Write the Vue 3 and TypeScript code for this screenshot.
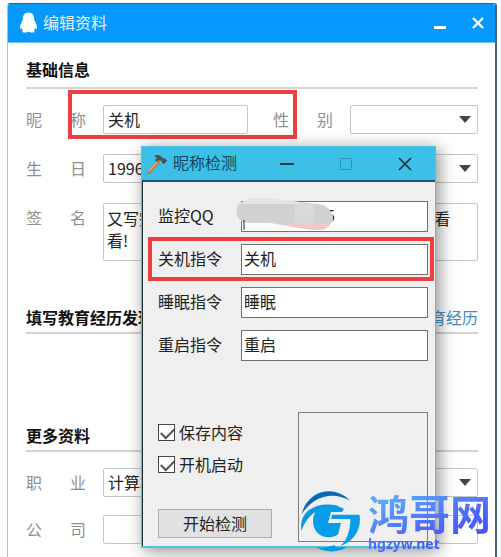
<script setup lang="ts">
import { ref } from 'vue'

interface Command {
  id: string
  label: string
  value: string
  marked: boolean
}

const nickname = ref('关机')
const signature = ref('又写完' + '\u3000'.repeat(17) + '\u00a0\u00a0看\n看!')
const commands = ref<Command[]>([
  { id: 'qq', label: '监控QQ', value: '', marked: false },
  { id: 'shutdown', label: '关机指令', value: '关机', marked: true },
  { id: 'sleep', label: '睡眠指令', value: '睡眠', marked: false },
  { id: 'restart', label: '重启指令', value: '重启', marked: false },
])
const saveContent = ref(true)
const autoStart = ref(true)
</script>

<template>
  <div class="desktop">
    <main class="profile">
      <header class="profile-bar">
        <svg class="penguin" viewBox="0 0 18 22" aria-hidden="true">
          <path d="M9 0C5 0 3 3 3 7c0 2-3 5-3 9 0 2 1 2 2 0 0 2 1 3 1 3-1 1-1 2 1 2h3l2-1 2 1h3c2 0 2-1 1-2l1-3c1 2 2 2 2 0 0-4-3-7-3-9 0-4-2-7-6-7Z" fill="#fff" />
        </svg>
        <h1>编辑资料</h1>
        <button class="bar-button" type="button" aria-label="最小化">
          <svg viewBox="0 0 14 14"><path d="M1 11.5h12" stroke="#fff" stroke-width="3" /></svg>
        </button>
        <button class="bar-button" type="button" aria-label="关闭">
          <svg viewBox="0 0 14 14"><path d="m2 2 10 10M12 2 2 12" stroke="#fff" stroke-width="2.4" /></svg>
        </button>
      </header>

      <form class="profile-body" @submit.prevent>
        <h2 class="first">基础信息</h2>
        <div class="rows">
          <div class="row">
            <label class="spread" for="nick"><span>昵</span><span>称</span></label>
            <input id="nick" v-model="nickname" class="nick" type="text" />
            <label class="spread second" for="gender"><span>性</span><span>别</span></label>
            <div class="pick">
              <select id="gender"><option></option></select>
              <svg viewBox="0 0 12 8" aria-hidden="true"><path d="M0 1h12L6 8Z" /></svg>
            </div>
            <span class="mark nick-mark"></span>
          </div>
          <div class="row">
            <label class="spread" for="birth"><span>生</span><span>日</span></label>
            <div class="pick">
              <select id="birth"><option>1996</option></select>
              <svg viewBox="0 0 12 8" aria-hidden="true"><path d="M0 1h12L6 8Z" /></svg>
            </div>
          </div>
          <div class="row">
            <label class="spread" for="sign"><span>签</span><span>名</span></label>
            <textarea id="sign" v-model="signature"></textarea>
          </div>
        </div>

        <div class="head education">
          <h2>填写教育经历发现</h2>
          <a href="#">教育经历</a>
        </div>

        <div class="head more"><h2>更多资料</h2></div>
        <div class="rows tight">
          <div class="row">
            <label class="spread" for="job"><span>职</span><span>业</span></label>
            <div class="pick">
              <select id="job"><option>计算机</option></select>
              <svg viewBox="0 0 12 8" aria-hidden="true"><path d="M0 1h12L6 8Z" /></svg>
            </div>
          </div>
          <div class="row">
            <label class="spread" for="company"><span>公</span><span>司</span></label>
            <input id="company" type="text" />
          </div>
        </div>
      </form>
    </main>

    <section class="dialog" aria-labelledby="dialog-title">
      <header class="dialog-bar">
        <svg class="hammer" viewBox="0 0 20 20" aria-hidden="true">
          <path d="M2 18.500 12 7" stroke="#b97b35" stroke-width="3.400" stroke-linecap="round" />
          <path d="M2 17.500 11 7" stroke="#e8b168" stroke-width="1.200" stroke-linecap="round" />
          <path d="M7 2c3-2 6-1 8 1l2 2 1-1 2 3-3 3-2-1v-2l-3-1-2 2-2-2 2-2Z" fill="#46535a" />
        </svg>
        <h1 id="dialog-title">昵称检测</h1>
        <div class="window-buttons">
          <button type="button" aria-label="最小化">
            <svg viewBox="0 0 14 14"><path d="M0 7h14" stroke="#173d49" stroke-width="2" /></svg>
          </button>
          <button type="button" aria-label="最大化" disabled>
            <svg viewBox="0 0 14 14"><path d="M1.500 1.500h11v11h-11Z" stroke="#2898b8" fill="none" /></svg>
          </button>
          <button type="button" aria-label="关闭">
            <svg viewBox="0 0 14 14"><path d="m1 1 12 12M13 1 1 13" stroke="#102f39" stroke-width="1.600" /></svg>
          </button>
        </div>
      </header>

      <form class="dialog-body" @submit.prevent>
        <div v-for="c in commands" :key="c.id" class="command">
          <label :for="c.id">{{ c.label }}</label>
          <input :id="c.id" v-model="c.value" type="text" />
          <span v-if="c.marked" class="mark command-mark"></span>
          <template v-if="c.id === 'qq'">
            <span class="tail">5</span>
            <svg class="smudge" viewBox="0 0 98 36" aria-hidden="true">
              <path d="M28 25 88 20 97 17c0 9-4 15-12 16-12 1-25-3-57-8Z" fill="#efc8c8" />
              <path d="M2 8C10 1 22 0 35 2l47 5c9 1 14 6 15 16-1 3-2 3-5 3H12C2 26-2 16 2 8Z" fill="#d1d1cf" />
              <path d="M2 8C10 1 22 0 35 2l30 3v2H2Z" fill="#e5e4e3" />
              <path d="M59 7h19v19H59Z" fill="#d9d9db" />
              <path d="M8 23v10" stroke="#222" stroke-width="1" />
            </svg>
          </template>
        </div>

        <div class="lower">
          <div class="options">
            <label><input v-model="saveContent" type="checkbox" />保存内容</label>
            <label><input v-model="autoStart" type="checkbox" />开机启动</label>
            <button type="submit">开始检测</button>
          </div>
          <div class="log"></div>
        </div>
      </form>
    </section>

    <aside class="brand">
      <svg viewBox="0 0 60 62" aria-hidden="true">
        <path d="M.7 24C6 2 31-7 49 10.500 31 1 13 6 .7 24Z" fill="#0869b2" />
        <path d="M.5 41C-3 22 15 10 38 16 20 15 6 24 .5 41Z" fill="#0799e4" />
        <path d="M43 19C33 12 12 14 12 31c0 15 15 20 25 13.500L40 33H27l3-11h11Z" fill="#079de8" />
        <path d="M31 24.700h27.500C61 40 52 52 39.500 56 46 50 49 41 49.500 29H30Z" fill="#079de8" />
        <path d="M14.500 57.300c7 1 13 0 18.500-2.300l2 2.300h11c-9 5.500-22 5.500-31.500 0Z" fill="#0799e4" />
      </svg>
      <div class="brand-text">
        <strong>鸿哥网</strong>
        <span>hgzyw.net</span>
      </div>
    </aside>
  </div>
</template>

<style>
body {
  margin: 0;
  background: #fdfdfd;
}
</style>

<style scoped>
* {
  box-sizing: border-box;
}

.desktop {
  position: relative;
  overflow: hidden;
  padding: 3px 4px 0 7px;
  font: 16px/22px "Noto Sans CJK SC", "Noto Sans", sans-serif;
  color: #222;
}

h1,
h2 {
  margin: 0;
  font-size: 16px;
  line-height: 22px;
}

h1 {
  font-weight: 400;
}

h2 {
  color: #111;
  font-weight: 700;
}

button,
input,
select,
textarea {
  margin: 0;
  font: inherit;
  color: inherit;
}

.profile {
  border: 1px solid #b9bec2;
  border-top-color: #126fae;
  border-right: 2px solid #4a6380;
  border-bottom: 0;
  border-radius: 3px 3px 0 0;
  background: #fff;
}

.profile-bar {
  display: flex;
  align-items: center;
  height: 39px;
  padding: 0 10px 0 12px;
  border-bottom: 1px solid #72c4fb;
  border-radius: 2px 2px 0 0;
  background: #0699fd;
  color: #e2f4ff;
}

.penguin {
  width: 17px;
  height: 22px;
  margin-right: 6px;
}

.profile-bar h1 {
  flex: 1;
  padding-bottom: 2px;
}

.bar-button {
  width: 14px;
  height: 22px;
  margin-left: 24px;
  padding: 0;
  border: 0;
  background: none;
}

.bar-button svg {
  display: block;
  width: 14px;
  height: 14px;
}

.profile-body {
  padding: 15px 17px 13px 18px;
}

.first,
.head {
  padding-bottom: 7px;
  border-bottom: 2px solid #d4d4d4;
}

.head {
  display: flex;
  justify-content: space-between;
  padding-bottom: 4px;
}

.education {
  margin-top: 45px;
}

.more {
  margin-top: 90px;
}

.head a {
  color: #3c8fc4;
  text-decoration: none;
}

.rows {
  display: flex;
  flex-direction: column;
  gap: 20px;
  padding-top: 16px;
}

.tight {
  gap: 18px;
}

.row {
  position: relative;
  display: flex;
  align-items: flex-start;
  gap: 17px;
}

.spread {
  display: flex;
  flex: 0 0 60px;
  justify-content: space-between;
  padding-top: 3px;
  color: #8f8f8f;
}

.second {
  margin-left: 8px;
}

.row input,
.row select,
.row textarea {
  display: block;
  flex: 1;
  width: 100%;
  min-width: 0;
  height: 29px;
  padding: 0 4px 2px;
  border: 1px solid #c6c6c6;
  border-radius: 2px;
  background: #fff;
  outline: 0;
}

.row .nick {
  flex: 0 0 145px;
}

.row textarea {
  height: 58px;
  padding: 3px 3px;
  resize: none;
  overflow: hidden;
}

.row select {
  appearance: none;
}

.pick {
  position: relative;
  flex: 1;
}

.pick svg {
  position: absolute;
  top: 10px;
  right: 7px;
  width: 12px;
  height: 8px;
  fill: #444;
  pointer-events: none;
}

.mark {
  position: absolute;
  border: 4px solid #ef3e40;
  pointer-events: none;
}

.nick-mark {
  top: -15px;
  left: 42px;
  width: 229px;
  height: 49px;
}

.dialog {
  position: absolute;
  top: 146px;
  left: 141px;
  width: 295px;
  border: 1px solid #4fc3e2;
  border-bottom-width: 2px;
  background: #efefef;
  box-shadow: 3px 3px 16px rgba(0, 0, 0, 0.45);
}

.dialog-bar {
  display: flex;
  align-items: center;
  height: 35px;
  padding: 0 23px 0 5px;
  border-bottom: 2px solid #1d5668;
  background: #3cc0e8;
  color: #10485a;
}

.hammer {
  width: 20px;
  height: 20px;
  margin-right: 6px;
  fill: none;
}

.dialog-bar h1 {
  flex: 1;
  padding-bottom: 3px;
}

.window-buttons {
  display: flex;
  gap: 45px;
}

.window-buttons button {
  width: 14px;
  height: 14px;
  padding: 0;
  border: 0;
  background: none;
}

.window-buttons svg {
  display: block;
  fill: none;
}

.dialog-body {
  display: flex;
  flex-direction: column;
  gap: 12px;
  padding: 19px 7px 4px 15px;
  border-left: 1px solid #123039;
}

.command {
  position: relative;
  display: grid;
  grid-template-columns: 83px 1fr;
  align-items: center;
}

.command label {
  padding-bottom: 4px;
}

.command input {
  width: 100%;
  min-width: 0;
  height: 31px;
  padding: 0 2px 4px;
  border: 1px solid #6f6f6f;
  border-radius: 0;
  background: #fff;
  outline: 0;
}

.command-mark {
  inset: -7px -6px -6px -10px;
}

.tail {
  position: absolute;
  top: 3px;
  left: 168px;
}

.smudge {
  position: absolute;
  top: -4px;
  left: 78px;
  width: 98px;
  height: 36px;
}

.lower {
  display: flex;
  justify-content: space-between;
  padding-top: 39px;
}

.options {
  display: flex;
  flex-direction: column;
  align-items: flex-start;
  gap: 10px;
  padding-top: 9px;
}

.options label {
  display: flex;
  align-items: center;
  gap: 4px;
}

.options input {
  position: relative;
  width: 17px;
  height: 17px;
  appearance: none;
  border: 1px solid #444;
  background: #fff;
}

.options input:checked::after {
  content: "";
  position: absolute;
  top: 3px;
  left: 2px;
  width: 11px;
  height: 6px;
  border: solid #555;
  border-width: 0 0 2px 2px;
  transform: rotate(-45deg);
}

.options button {
  width: 114px;
  height: 29px;
  margin-top: 24px;
  padding: 0 0 2px;
  border: 1px solid #adadad;
  border-radius: 0;
  background: #e1e1e1;
}

.log {
  width: 130px;
  height: 130px;
  border: 1px solid #7d7d7d;
}

.brand {
  position: absolute;
  right: 10px;
  bottom: 5px;
  display: flex;
  align-items: flex-start;
  gap: 7px;
}

.brand svg {
  width: 60px;
  height: 62px;
}

.brand-text {
  display: flex;
  flex-direction: column;
  gap: 4px;
  padding-top: 2px;
  color: transparent;
  background: linear-gradient(160deg, #5ca8fa 15%, #4e63fb 60%, #4141f6);
  background-clip: text;
}

.brand strong {
  font-size: 41px;
  font-weight: 700;
  line-height: 40px;
}

.brand span {
  font: 700 14px/16px "Noto Sans", sans-serif;
}
</style>
